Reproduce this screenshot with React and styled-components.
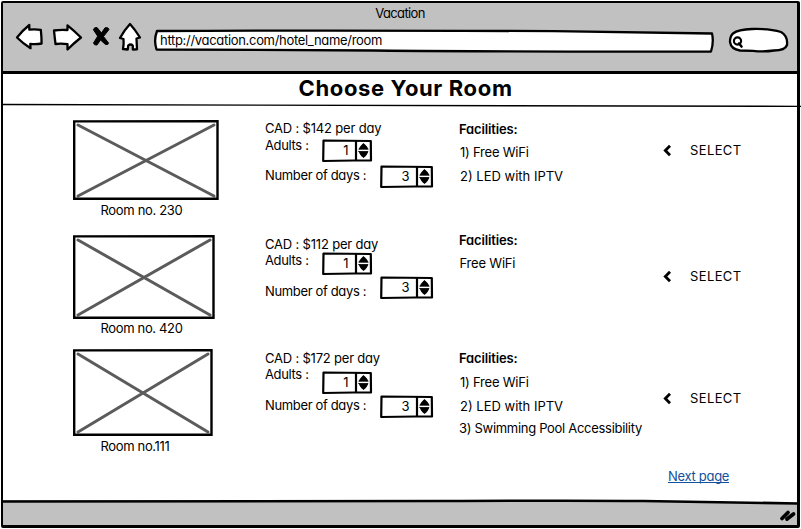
import React from 'react';
import styled, { createGlobalStyle } from 'styled-components';

const GlobalStyle = createGlobalStyle`
  * { box-sizing: border-box; }
  body { margin: 0; background: #fff; overflow: hidden; }
  svg { display: block; overflow: visible; flex: none; }
`;

const Page = styled.div`
  width: 801px;
  height: 529px;
  padding: 1px;
  background: #fff;
  color: #000;
  font: 400 13px/16px Inter, 'Liberation Sans', sans-serif;
  font-feature-settings: 'cv11';
`;

const BrowserWindow = styled.div`
  display: flex;
  flex-direction: column;
  width: 799px;
  height: 527px;
  border: solid #000;
  border-width: 2px 3px 3px 2px;
  border-radius: 2px;
`;

const Text = styled.div`
  white-space: pre;
  letter-spacing: ${(p) => p.$ls ?? 0}px;
  margin-top: ${(p) => p.$top ?? 0}px;
  margin-left: ${(p) => p.$left ?? 0}px;
`;

const Chrome = styled.header`
  flex: none;
  height: 71px;
  background: #c1c1c1;
  border-bottom: 3px solid #000;
`;

const WindowTitle = styled(Text)`
  padding-top: 2px;
  height: 18px;
  text-align: center;
`;

const NavBar = styled.div`
  display: flex;
  align-items: flex-start;
  padding-left: 12px;
`;

const Spacer = styled.span`
  flex: none;
  width: ${(p) => p.$width}px;
`;

const Overlap = styled.div`
  display: grid;
  flex: none;
  > * { grid-area: 1 / 1; }
`;

const AddressBar = styled(Overlap)`
  width: 560px;
  margin: 8px 0 0 12px;
`;

const SearchBox = styled.div`
  margin: 6px 0 0 14px;
`;

const PageHeader = styled.div`
  flex: none;
  height: 33px;
`;

const Heading = styled.h1`
  margin: 0 0 0 295.5px;
  padding-top: 1px;
  height: 30px;
  font-size: 22px;
  font-weight: 700;
  line-height: 26px;
  letter-spacing: 0.64px;
  white-space: pre;
`;

const Rooms = styled.main`
  flex: 1;
  min-height: 0;
  padding: 13px 0 0 70px;
`;

const RoomRow = styled.section`
  display: grid;
  grid-template-columns: 192px 194px 203px auto;
  height: ${(p) => p.$height}px;
`;

const Column = styled.div`
  display: flex;
  flex-direction: column;
  align-items: flex-start;
`;

const Field = styled.div`
  display: flex;
  align-items: flex-start;
  height: ${(p) => p.$height}px;
`;

const FieldLabel = styled(Text)`
  flex: none;
  width: ${(p) => p.$width}px;
`;

const Stepper = styled(Overlap)`
  width: ${(p) => p.$width}px;
  height: 23px;
  margin-top: ${(p) => p.$top}px;
`;

const StepperValue = styled.span`
  justify-self: end;
  margin: 3px 23px 0 0;
`;

const FacilityTitle = styled(Text)`
  font-weight: 600;
`;

const SelectButton = styled.button`
  display: flex;
  align-items: flex-start;
  gap: 19px;
  height: 16px;
  margin-top: ${(p) => p.$top}px;
  padding: 0;
  border: 0;
  background: none;
  color: inherit;
  font: inherit;
  letter-spacing: 0.38px;
`;

const NextLink = styled.a`
  display: block;
  width: 61px;
  height: 15px;
  margin: 4px 0 0 595px;
  border-bottom: 1px solid #12519c;
  color: #12519c;
  line-height: 16px;
  letter-spacing: -0.3px;
  white-space: pre;
`;

const StatusBar = styled.footer`
  flex: none;
  display: flex;
  justify-content: space-between;
  height: 25px;
  background: #c1c1c1;
`;

const stroke = { stroke: '#000', strokeLinejoin: 'round', strokeLinecap: 'round' };

const BackIcon = () => (
  <svg width="30" height="30" fill="#fff" strokeWidth="2.3" {...stroke}>
    <path d="M2 16.5Q8 9 14.300 4V8.700q6-.8 11.500.2.800 7 .800 13.600-6 1-11.300.3l.2 4.400Q8 22.500 2 16.500Z" />
  </svg>
);

const ForwardIcon = () => (
  <svg width="32" height="30" fill="#fff" strokeWidth="2.3" {...stroke}>
    <path d="M2 9.500Q8 8.500 15.500 9V4.300Q22 9.500 29 16.500 22 22 15.500 28.500V23.200q-6-1.200-12-.2-.8-6.500-1.500-13.500Z" />
  </svg>
);

const StopIcon = () => (
  <svg width="18" height="26" {...stroke} strokeWidth="1">
    <path d="M1.500 8.500Q2 6 5 6.500L9.500 12 13 6.800Q16.500 6 17 8.500L11.500 15.500 16.500 22Q16.500 24 13.500 23.500L8.500 19 5 24Q2 24.500 1.500 22L5.500 15.500Z" />
  </svg>
);

const HomeIcon = () => (
  <svg width="24" height="30" fill="#fff" strokeWidth="2.3" {...stroke}>
    <path d="M12 3Q17 8.500 22 16.500L18.500 17.500 19 28.300 14.800 28.500V24.500Q12.500 22.500 10.200 24.500L9.800 28.500 5 28Q6 23 5.500 18L2 17Q6 9.500 12 3Z" />
  </svg>
);

const AddressFrame = () => (
  <svg width="560" height="24" fill="#fff" strokeWidth="2.3" {...stroke}>
    <path d="M3 2Q180 1 400 2.200L558 4.500Q560 13 557 22.500Q350 22.800 220 21.500L2.500 20.500Q-.5 11 3 2Z" />
  </svg>
);

const SearchFrame = () => (
  <svg width="60" height="26" fill="#fff" strokeWidth="2.3" {...stroke}>
    <path d="M5 6.500Q10 2.500 24 2 42 1.500 53 5 60 9 59 18 57 23.500 46 23.500 36 25 25 23.800L12 23.500Q3 22 2 15 2 9 5 6.500Z" />
    <circle cx="9.500" cy="14" r="3.600" strokeWidth="2.200" />
    <path d="M11 16.500 13.500 19.500" strokeWidth="2.600" />
  </svg>
);

const HeaderRule = () => (
  <svg width="798" height="3" fill="none" stroke="#000" strokeWidth="1.400">
    <path d="M0 .5Q300 1.200 798 2.400" />
  </svg>
);

const FooterRule = () => (
  <svg width="760" height="6" fill="none" stroke="#000" strokeWidth="2.600">
    <path d="M760-3V-1H794V3.500L700 1.500Q600 0 440 .8 300 1.500 0 1.500" fill="#fff" stroke="none" />
    <path d="M0 1.500Q300 1.600 440 1T640 1L795 3.500" />
  </svg>
);

const ResizeGrip = () => (
  <svg width="20" height="24" fill="none" strokeWidth="3.800" {...stroke}>
    <path d="M5 18.500 11 12.500M10 19 16.500 14" />
  </svg>
);

const Placeholder = ({ width, height }) => (
  <svg width={width} height={height} fill="none">
    <path d={`M5 5 ${width - 5} ${height - 4}M${width - 5} 5 5 ${height - 4}`} stroke="#5b5b5b" strokeWidth="3" strokeLinecap="round" />
    <path d={`M1.200 1.400 ${width - 1.500} 1.200V${height - 1.200}L1.200 ${height - 1.200}Z`} stroke="#000" strokeWidth="2.400" />
  </svg>
);

const StepperFrame = ({ width }) => (
  <svg width={width} height="23" fill="none" {...stroke}>
    <path d={`M1.500 1.500 ${width - 1.200} 2 ${width - 1} 21.500 ${width - 18} 21.500 1.200 22Z`} strokeWidth="2.200" />
    <path d={`M${width - 16} 2V21`} strokeWidth="2.200" />
    <path d={`M${width - 13} 10Q${width - 10} 5 ${width - 8.500} 4.500 ${width - 6} 6 ${width - 4} 10Z`} fill="#000" strokeWidth=".8" />
    <path d={`M${width - 13} 12.500H${width - 4}Q${width - 6} 17.500 ${width - 8.500} 18.500 ${width - 11} 17.500 ${width - 13} 12.500Z`} fill="#000" strokeWidth=".8" />
  </svg>
);

const Chevron = () => (
  <svg width="9" height="16" fill="none" stroke="#000" strokeWidth="2.800">
    <path d="M8 3.700 3.300 8.500 8 13.300" />
  </svg>
);

const rooms = [
  {
    height: 115, image: [146, 80], caption: ['Room no. 230', 2, -0.33],
    price: ['CAD : $142 per day', 0, -0.18], adults: [1, 3, 30], days: -1,
    title: 1,
    facilities: [['1) Free WiFi', 7, 1, -0.22], ['2) LED with IPTV', 8, 1, 0]],
    select: 22,
  },
  {
    height: 114, image: [142, 84], caption: ['Room no. 420', 1, -0.35],
    price: ['CAD : $112 per day', 1, -0.18], adults: [0, 0, 30], days: -6,
    title: -3,
    facilities: [['Free WiFi', 7, 0.5, -0.2]],
    select: 33,
  },
  {
    height: 115, image: [140, 87], caption: ['Room no.111', 2, -0.35],
    price: ['CAD : $172 per day', 1, -0.2], adults: [0, 5, 30], days: -1,
    title: 1,
    facilities: [
      ['1) Free WiFi', 8, 1, -0.22],
      ['2) LED with IPTV', 8, 1, 0],
      ['3) Swimming Pool Accessibility', 6, 0, -0.3],
    ],
    select: 41,
  },
];

const Room = ({ room }) => (
  <RoomRow $height={room.height}>
    <Column>
      <Placeholder width={room.image[0]} height={room.image[1]} />
      <Text $top={room.caption[1]} $left={27.5} $ls={room.caption[2]}>{room.caption[0]}</Text>
    </Column>
    <Column>
      <Text $top={room.price[1]} $ls={room.price[2]}>{room.price[0]}</Text>
      <Field $height={room.adults[2]}>
        <FieldLabel $width={56.5} $top={room.adults[0]} $ls={-0.35}>Adults :</FieldLabel>
        <Stepper $width={50} $top={room.adults[1]}>
          <StepperFrame width={50} />
          <StepperValue>1</StepperValue>
        </Stepper>
      </Field>
      <Field $height={24}>
        <FieldLabel $width={114.5} $top={1} $ls={-0.35}>Number of days :</FieldLabel>
        <Stepper $width={53} $top={room.days}>
          <StepperFrame width={53} />
          <StepperValue>3</StepperValue>
        </Stepper>
      </Field>
    </Column>
    <Column>
      <FacilityTitle $top={room.title} $ls={-0.15}>Facilities:</FacilityTitle>
      {room.facilities.map(([label, top, left, ls]) => (
        <Text key={label} $top={top} $left={left} $ls={ls}>{label}</Text>
      ))}
    </Column>
    <Column>
      <SelectButton $top={room.select}>
        <Chevron />
        SELECT
      </SelectButton>
    </Column>
  </RoomRow>
);

export default function App() {
  return (
    <Page>
      <GlobalStyle />
      <BrowserWindow>
        <Chrome>
          <WindowTitle $ls={-0.62}>Vacation</WindowTitle>
          <NavBar>
            <BackIcon />
            <Spacer $width={7} />
            <ForwardIcon />
            <Spacer $width={8} />
            <StopIcon />
            <Spacer $width={8} />
            <HomeIcon />
            <AddressBar>
              <AddressFrame />
              <Text $top={3} $left={6} $ls={-0.31}>http://vacation.com/hotel_name/room</Text>
            </AddressBar>
            <SearchBox>
              <SearchFrame />
            </SearchBox>
          </NavBar>
        </Chrome>
        <PageHeader>
          <Heading>Choose Your Room</Heading>
          <HeaderRule />
        </PageHeader>
        <Rooms>
          {rooms.map((room) => (
            <Room key={room.caption[0]} room={room} />
          ))}
          <NextLink>Next page</NextLink>
        </Rooms>
        <StatusBar>
          <FooterRule />
          <ResizeGrip />
        </StatusBar>
      </BrowserWindow>
    </Page>
  );
}
